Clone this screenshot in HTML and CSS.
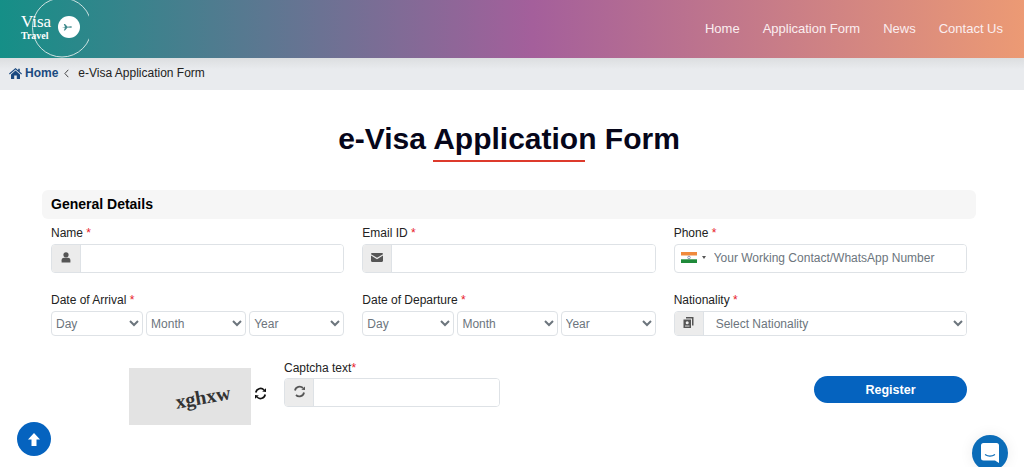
FILE: index.html
```html
<!DOCTYPE html>
<html lang="en">
<head>
	<meta charset="UTF-8">
	<title>e-Visa Application Form</title>
	<link rel="stylesheet" href="styles.css">
</head>
<body>
	<header class="topbar">
		<a class="logo" href="#">
			<svg class="logoRing" width="72" height="58" viewBox="0 0 72 58">
				<circle cx="45" cy="27.5" r="29.5" fill="none" stroke="#cfe3e2" stroke-width="1"/>
				<circle cx="52" cy="27" r="11" fill="#fff"/>
				<path d="M45 27.8l3-.8-1.2-3h1.2l2.6 2.8 3.4-.6c1.2 0 1.2 1.6 0 1.6l-3.4-.2-2.6 3h-1.2l1.2-2.8-3 .0z" fill="#3f8a8c"/>
			</svg>
			<span class="logoVisa">Visa</span>
			<span class="logoTravel">Travel</span>
		</a>
		<nav class="mainNav">
			<a href="#">Home</a>
			<a href="#">Application Form</a>
			<a href="#">News</a>
			<a href="#">Contact Us</a>
		</nav>
	</header>

	<div class="crumbs">
		<svg width="13" height="11" viewBox="0 0 13 11"><path d="M6.5 0L0 5.6l.7.8L6.5 1.5l5.8 4.9.7-.8-2.2-1.9V.8H9.2v1.4zM2 6.4V11h3.2V7.6h2.6V11H11V6.4L6.5 2.6z" fill="#1b4a80"/></svg>
		<a class="crumbHome" href="#">Home</a>
		<svg class="crumbSep" width="5" height="9" viewBox="0 0 5 9"><path d="M4.3.8L.9 4.5l3.4 3.7" fill="none" stroke="#444" stroke-width="1"/></svg>
		<span>e-Visa Application Form</span>
	</div>

	<main class="content">
		<h1 class="pageTitle">e-Visa Application Form</h1>
		<div class="titleLine"></div>

		<h2 class="sectionHead">General Details</h2>

		<form class="formGrid">
			<div class="field">
				<label>Name <b>*</b></label>
				<div class="inputBox">
					<span class="addon">
						<svg width="10" height="11" viewBox="0 0 10 11"><circle cx="5" cy="2.8" r="2.6" fill="#555"/><path d="M.6 10.5V8.2C.6 6.6 2 5.8 3 5.8h4c1 0 2.4.8 2.4 2.4v2.3z" fill="#555"/></svg>
					</span>
					<input type="text">
				</div>
			</div>
			<div class="field">
				<label>Email ID <b>*</b></label>
				<div class="inputBox">
					<span class="addon">
						<svg width="12" height="9" viewBox="0 0 12 9"><path d="M0 1.2C0 .5.5 0 1.2 0h9.6c.7 0 1.2.5 1.2 1.2L6 4.8zM0 2.6l6 3.6 6-3.6v5.2c0 .7-.5 1.2-1.2 1.2H1.2C.5 9 0 8.500 0 7.800z" fill="#555"/></svg>
					</span>
					<input type="text">
				</div>
			</div>
			<div class="field">
				<label>Phone <b>*</b></label>
				<div class="inputBox">
					<span class="flagPick">
						<svg width="16" height="11" viewBox="0 0 16 11"><rect width="16" height="3.700" fill="#f08a3c"/><rect y="3.700" width="16" height="3.600" fill="#fff"/><rect y="7.300" width="16" height="3.700" fill="#1f8a3a"/><circle cx="8" cy="5.500" r="1.300" fill="none" stroke="#33457f" stroke-width=".5"/></svg>
						<i class="caret"></i>
					</span>
					<input class="phoneInput" type="text" placeholder="Your Working Contact/WhatsApp Number">
				</div>
			</div>

			<div class="field">
				<label>Date of Arrival <b>*</b></label>
				<div class="dateRow">
					<select><option>Day</option></select>
					<select><option>Month</option></select>
					<select><option>Year</option></select>
				</div>
			</div>
			<div class="field">
				<label>Date of Departure <b>*</b></label>
				<div class="dateRow">
					<select><option>Day</option></select>
					<select><option>Month</option></select>
					<select><option>Year</option></select>
				</div>
			</div>
			<div class="field">
				<label>Nationality <b>*</b></label>
				<div class="inputBox selectBox">
					<span class="addon">
						<svg width="11" height="11" viewBox="0 0 11 11"><path d="M3 0h7.500v8.500H9V1.500H3z" fill="#555"/><path d="M.5 2.500H8V11H.5z" fill="#555"/><circle cx="4.200" cy="5.700" r="1.500" fill="#ececec"/><rect x="2" y="8.600" width="4.500" height=".9" fill="#ececec"/></svg>
					</span>
					<select><option>Select Nationality</option></select>
				</div>
			</div>
		</form>

		<div class="captchaRow">
			<div class="captchaImg"><span>xghxw</span></div>
			<svg class="reloadIcon" width="13" height="13" viewBox="0 0 13 13">
				<path d="M1.800 5.500A4.800 4.800 0 0 1 10 3" fill="none" stroke="#111" stroke-width="1.700"/>
				<path d="M11.200 7.500A4.800 4.800 0 0 1 3 10" fill="none" stroke="#111" stroke-width="1.700"/>
				<path d="M8.200 4.600L12 5V1.200zM4.800 8.400L1 8v3.800z" fill="#111"/>
			</svg>
			<div class="captchaField">
				<label>Captcha text<b>*</b></label>
				<div class="inputBox">
					<span class="addon">
						<svg width="13" height="13" viewBox="0 0 13 13">
							<path d="M2 5.500A4.700 4.700 0 0 1 10 3" fill="none" stroke="#555" stroke-width="1.800"/>
							<path d="M11 7.500A4.700 4.700 0 0 1 3 10" fill="none" stroke="#555" stroke-width="1.800"/>
							<path d="M8.400 4.800L12 5V1.400z" fill="#555"/>
						</svg>
					</span>
					<input type="text">
				</div>
			</div>
			<button class="registerBtn" type="button">Register</button>
		</div>
	</main>

	<a class="toTop" href="#">
		<svg width="12" height="13" viewBox="0 0 12 13"><path d="M6 0l6 6.500H8.500V13h-5V6.500H0z" fill="#fff"/></svg>
	</a>
	<a class="chatBtn" href="#">
		<svg width="18" height="20" viewBox="0 0 18 20"><path d="M2.500 0h13A2.500 2.500 0 0 1 18 2.500V20l-4-2.500H2.500A2.500 2.500 0 0 1 0 15V2.500A2.500 2.500 0 0 1 2.500 0z" fill="#fff"/><path d="M4 11.500c3 2 7 2 10 0" fill="none" stroke="#0b6cb8" stroke-width="1.200"/></svg>
	</a>
</body>
</html>
```

FILE: styles.css
```css
*{
	margin: 0;
	padding: 0;
	box-sizing: border-box;
}
html,body{
	height: 467px;
	overflow: hidden;
}
body{
	background-color: #fff;
	color: #212529;
	font: 12px/16px "Liberation Sans", Arial, sans-serif;
}
a{
	text-decoration: none;
}

/* top bar */
.topbar{
	display: flex;
	justify-content: space-between;
	align-items: center;
	height: 58px;
	background: linear-gradient(90deg, #158f87 0%, #a45f9b 52%, #ec9a74 100%);
}
.logo{
	position: relative;
	display: block;
	width: 100px;
	height: 58px;
	margin-left: 17px;
	color: #fff;
}
.logoRing{
	position: absolute;
	top: 0;
	left: 0;
}
.logoVisa{
	position: absolute;
	top: 13px;
	left: 4px;
	font: 17px/18px "Liberation Serif", serif;
}
.logoTravel{
	position: absolute;
	top: 30px;
	left: 4px;
	font: bold 10px/12px "Liberation Serif", serif;
}
.mainNav{
	display: flex;
	gap: 23px;
	padding-right: 21px;
}
.mainNav a{
	color: #fbeef0;
	font-size: 13px;
}

/* breadcrumb */
.crumbs{
	display: flex;
	align-items: center;
	height: 32px;
	padding: 0 0 2px 9px;
	background: linear-gradient(180deg, #dcdee0 0%, #e9ebee 35%, #e9ebee 100%);
	color: #222;
}
.crumbHome{
	margin-left: 3px;
	color: #1b4a80;
	font-weight: bold;
}
.crumbSep{
	margin: 0 9px 0 6px;
}

/* content */
.content{
	width: 934px;
	margin-left: 42px;
}
.pageTitle{
	padding-top: 32px;
	color: #06061a;
	font-size: 30px;
	line-height: 34px;
	text-align: center;
}
.titleLine{
	width: 152px;
	height: 2px;
	margin: 4px auto 0;
	background-color: #dd3a2c;
}
.sectionHead{
	height: 29px;
	margin-top: 28px;
	padding-left: 9px;
	background-color: #f6f6f6;
	border-radius: 6px;
	color: #000;
	font-size: 14px;
	line-height: 29px;
}

.formGrid{
	display: grid;
	grid-template-columns: repeat(3, 1fr);
	column-gap: 18px;
	row-gap: 19px;
	padding: 6px 9px 0;
}
label{
	display: block;
	margin-bottom: 3px;
	color: #222;
}
label b{
	color: #e8202a;
	font-weight: normal;
}
.inputBox{
	display: flex;
	height: 29px;
	background-color: #fff;
	border: 1px solid #dee2e6;
	border-radius: 4px;
	overflow: hidden;
}
.addon{
	display: flex;
	justify-content: center;
	align-items: center;
	flex: none;
	width: 29px;
	padding-bottom: 3px;
	background-color: #ececec;
	border-right: 1px solid #dee2e6;
}
.inputBox input{
	flex: 1;
	min-width: 0;
	border: 0;
	outline: 0;
	font: 12px "Liberation Sans", Arial, sans-serif;
}
.inputBox input::placeholder{
	color: #6c757d;
	opacity: 1;
}
.flagPick{
	display: flex;
	align-items: center;
	flex: none;
	gap: 5px;
	width: 39px;
	padding: 0 0 2px 6px;
}
.caret{
	border-top: 3px solid #555;
	border-left: 2px solid transparent;
	border-right: 2px solid transparent;
}
.phoneInput{
	padding-bottom: 2px;
}
select{
	height: 25px;
	min-width: 0;
	background-color: #fff;
	border: 1px solid #dee2e6;
	border-radius: 4px;
	outline: 0;
	color: #6c757d;
	font: 12px "Liberation Sans", Arial, sans-serif;
}
.dateRow{
	display: grid;
	grid-template-columns: 92fr 100fr 95fr;
	gap: 3px;
}
.selectBox{
	height: 25px;
}
.selectBox .addon{
	padding-bottom: 2px;
}
.selectBox select{
	flex: 1;
	height: 23px;
	padding-left: 8px;
	border: 0;
	border-radius: 0;
}

/* captcha row */
.captchaRow{
	display: flex;
	align-items: flex-start;
	margin-top: 24px;
	padding: 0 9px 0 87px;
}
.captchaImg{
	display: flex;
	justify-content: center;
	align-items: center;
	flex: none;
	width: 122px;
	height: 57px;
	margin-top: 8px;
	padding-left: 25px;
	background-color: #e3e3e3;
}
.captchaImg span{
	color: #333;
	font: bold 20px/20px "Liberation Serif", serif;
	transform: rotate(-10deg);
}
.reloadIcon{
	flex: none;
	margin: 27px 17px 0 3px;
}
.captchaField{
	flex: none;
	width: 216px;
}
.captchaField label{
	margin-bottom: 2px;
}
.captchaField label b{
	margin-left: 0;
}
.registerBtn{
	width: 153px;
	height: 27px;
	margin: 16px 0 0 auto;
	background-color: #0563bf;
	border: 0;
	border-radius: 14px;
	color: #fff;
	font: bold 12.5px "Liberation Sans", Arial, sans-serif;
}

/* floating buttons */
.toTop{
	position: fixed;
	left: 17px;
	top: 422px;
	display: flex;
	justify-content: center;
	align-items: center;
	width: 34px;
	height: 34px;
	background-color: #0563bf;
	border-radius: 50%;
}
.chatBtn{
	position: fixed;
	left: 972px;
	top: 435px;
	display: flex;
	justify-content: center;
	align-items: center;
	width: 36px;
	height: 36px;
	background-color: #0b6cb8;
	border-radius: 50%;
	box-shadow: 0 0 14px rgba(0,0,0,.08);
}
```
